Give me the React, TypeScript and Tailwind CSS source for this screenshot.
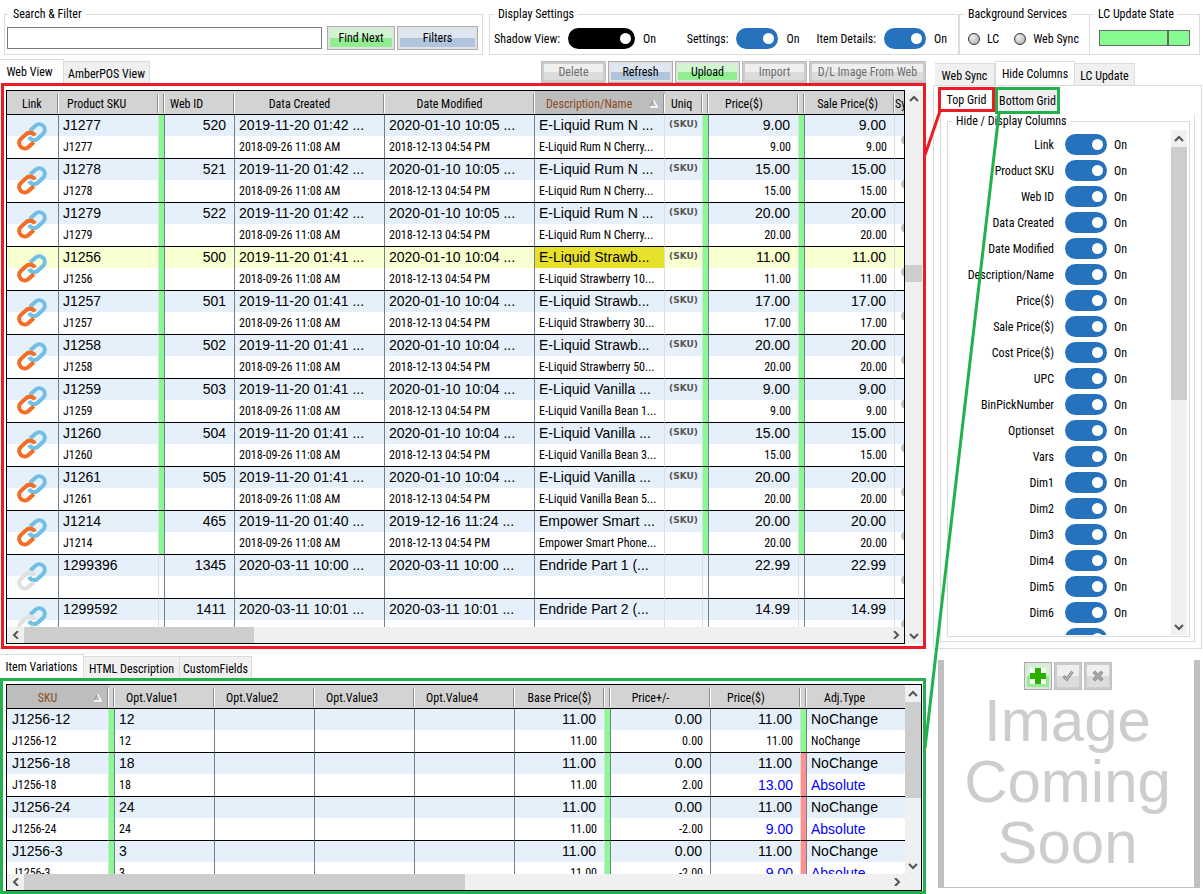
import type { ReactNode } from "react";

const BUTTON_TONES = {
  green: "border-[#adadad] bg-[linear-gradient(#d0f5d0_50%,#90ee90_50%)] shadow-[inset_0_0_0_2px_#e1e1e1] text-black",
  blue: "border-[#adadad] bg-[linear-gradient(#dfe7f2_50%,#b0c4de_50%)] shadow-[inset_0_0_0_2px_#e1e1e1] text-black",
  gray: "border-[#bfbfbf] bg-[linear-gradient(#efefef_50%,#dcdcdc_50%)] shadow-[inset_0_0_0_2px_#cccccc] text-[#6d6d6d]",
};

function Button({
  tone,
  className,
  label,
  disabled,
  children,
}: {
  tone: keyof typeof BUTTON_TONES;
  className: string;
  label?: string;
  disabled?: boolean;
  children: ReactNode;
}) {
  return (
    <button
      type="button"
      aria-label={label}
      disabled={disabled}
      className={"flex shrink-0 items-center justify-center border " + BUTTON_TONES[tone] + " " + className}
    >
      {children}
    </button>
  );
}

function Toggle({ label, wide }: { label: string; wide?: boolean }) {
  return (
    <input
      type="checkbox"
      role="switch"
      aria-label={label}
      defaultChecked
      className={
        "relative h-[21px] shrink-0 appearance-none rounded-full before:absolute before:right-1 before:top-[5px] before:size-[11px] before:rounded-full before:bg-white " +
        (wide ? "w-[67px] bg-black" : "w-[42px] bg-[#2672bd]")
      }
    />
  );
}

function Group({ title, className, children }: { title: string; className: string; children: ReactNode }) {
  return (
    <fieldset className={"min-w-0 border border-[#dcdcdc] " + className}>
      <legend className="ml-1 px-1 leading-[14px]">{title}</legend>
      {children}
    </fieldset>
  );
}

function Tab({ active, className, children }: { active?: boolean; className: string; children: ReactNode }) {
  return (
    <button
      type="button"
      role="tab"
      aria-selected={!!active}
      className={
        "shrink-0 whitespace-nowrap border border-b-0 border-[#dcdcdc] text-center " +
        (active ? "h-6 bg-white " : "h-[22px] border-l-0 bg-[#f0f0f0] pt-0.5 ") +
        className
      }
    >
      {children}
    </button>
  );
}

const ARROWS = {
  up: "M1 6 L5 2 L9 6",
  down: "M1 2 L5 6 L9 2",
  left: "M7 0 L3 4 L7 8",
  right: "M3 0 L7 4 L3 8",
};

function Arrow({ dir }: { dir: keyof typeof ARROWS }) {
  const vertical = dir === "up" || dir === "down";
  return (
    <span className={"flex shrink-0 items-center justify-center " + (vertical ? "h-[17px] w-full" : "h-full w-[17px]")}>
      <svg width="10" height="8" viewBox="0 0 10 8" fill="none" stroke="#555" strokeWidth="2">
        <path d={ARROWS[dir]} />
      </svg>
    </span>
  );
}

function SortMark() {
  return (
    <svg width="9" height="9" viewBox="0 0 9 9" className="absolute right-1.5 top-[5px]" fill="none">
      <path d="M4.5 1 L0.8 8" stroke="#8f8f8f" />
      <path d="M4.5 1 L8.2 8 H0.8" stroke="#fff" strokeWidth="1.4" />
    </svg>
  );
}

function ChainIcon({ linked }: { linked: boolean }) {
  return (
    <svg width="50" height="43" viewBox="0 3 150 129" fill="none" strokeWidth="11" className="mx-auto">
      <g transform="translate(72 67) rotate(-42) scale(1.12)">
        <path stroke="#6fc0e4" d="M7 -15 H26 A15 15 0 0 1 26 15 H8 A15 15 0 0 1 -7 -4" />
        <path stroke={linked ? "#f36f27" : "#e0e0e0"} d="M-7 15 H-26 A15 15 0 0 1 -26 -15 H-8 A15 15 0 0 1 7 4" />
      </g>
    </svg>
  );
}

interface Column {
  title: string;
  width: string;
  kind?: "text" | "number" | "flag" | "link" | "uniq" | "sync";
  align?: string;
  pad?: string;
  light?: boolean;
  sorted?: boolean;
}

interface Cell {
  top?: string;
  bottom?: string;
  changed?: boolean;
}

interface Row {
  id: string;
  cells: Cell[];
  selected?: boolean;
  unlinked?: boolean;
  flags?: string[];
}

const BAND = "bg-[linear-gradient(#e6f0fa_21px,#fff_21px)]";
const SELECTED_BAND = "bg-[linear-gradient(#f8ffd0_21px,#fff_21px)]";

function HeaderCell({ col }: { col: Column }) {
  return (
    <th
      scope="col"
      className={
        "h-6 border-b border-black p-0 pt-0.5 text-left font-normal " +
        (col.sorted ? "bg-[#bdbdbd] text-[#8b4a20]" : "bg-[#d3d3d3]")
      }
    >
      <div
        className={
          "relative h-[19px] overflow-hidden whitespace-nowrap border-r border-white leading-[21px] shadow-[inset_-1px_0_0_#8c8c8c] " +
          (col.align ?? "")
        }
      >
        {col.title}
        {col.sorted && <SortMark />}
      </div>
    </th>
  );
}

function BodyCell({ col, cell, row, flag }: { col: Column; cell?: Cell; row: Row; flag?: string }) {
  const edge = col.light ? "border-r-[#dcdcdc]" : "border-r-[#708090]";
  const base = "h-11 overflow-hidden border-b border-r border-b-black p-0 align-top " + edge;
  if (col.kind === "flag") return <td className={base + " " + (flag ?? "")} />;
  if (col.kind === "link")
    return (
      <td className={base}>
        <ChainIcon linked={!row.unlinked} />
      </td>
    );
  if (col.kind === "uniq")
    return (
      <td className={base + " text-center font-['DejaVu_Sans',sans-serif] text-[9px] leading-[18px] font-bold text-[#555]"}>
        {row.unlinked ? "" : "(SKU)"}
      </td>
    );
  if (col.kind === "sync")
    return (
      <td className={base + " pt-5 pl-1.5"}>
        <span className="block size-[10px] rounded-full bg-[#c0c0c0]" />
      </td>
    );
  const number = col.kind === "number";
  const pad = col.pad ?? "pl-1";
  const big = "font-['Liberation_Sans',sans-serif] text-[14px]";
  return (
    <td className={base}>
      <div
        className={
          "h-[21px] whitespace-nowrap leading-[21px] " +
          big +
          (number ? " pr-2 text-right" : " " + pad) +
          (row.selected && col.sorted ? " bg-[#e8e12c]" : "")
        }
      >
        {cell?.top}
      </div>
      <div
        className={
          "h-[22px] whitespace-nowrap leading-[22px] " +
          (number ? "pr-[7px] text-right " : pad + " ") +
          (cell?.changed ? big + " text-[#0000ff]" : "")
        }
      >
        {cell?.bottom}
      </div>
    </td>
  );
}

function Grid({ label, columns, rows }: { label: string; columns: Column[]; rows: Row[] }) {
  return (
    <table aria-label={label} className="w-max table-fixed border-separate border-spacing-0">
      <colgroup>
        {columns.map((c, i) => (
          <col key={i} className={c.width} />
        ))}
      </colgroup>
      <thead>
        <tr>
          {columns.map((c, i) => (
            <HeaderCell key={i} col={c} />
          ))}
        </tr>
      </thead>
      <tbody>
        {rows.map((r) => {
          let text = 0;
          let flags = 0;
          return (
            <tr key={r.id} className={r.selected ? SELECTED_BAND : BAND}>
              {columns.map((c, i) => {
                const plain = !c.kind || c.kind === "text" || c.kind === "number";
                return (
                  <BodyCell
                    key={i}
                    col={c}
                    row={r}
                    cell={plain ? r.cells[text++] : undefined}
                    flag={c.kind === "flag" ? r.flags?.[flags++] : undefined}
                  />
                );
              })}
            </tr>
          );
        })}
      </tbody>
    </table>
  );
}

const GREEN = "bg-[#87fb91]";
const RED = "bg-[#ff9191]";

const PRODUCT_COLUMNS: Column[] = [
  { title: "Link", width: "w-[52px]", kind: "link", align: "pl-[15px]" },
  { title: "Product SKU", width: "w-[100px]", align: "pl-2", light: true },
  { title: "", width: "w-[6px]", kind: "flag" },
  { title: "Web ID", width: "w-[70px]", kind: "number", align: "pl-[5px]" },
  { title: "Data Created", width: "w-[150px]", align: "pr-5 text-center" },
  { title: "Date Modified", width: "w-[150px]", align: "pr-5 text-center" },
  { title: "Description/Name", width: "w-[130px]", align: "pl-[11px]", light: true, sorted: true },
  { title: "Uniq", width: "w-[38px]", kind: "uniq", align: "pl-1.5", light: true },
  { title: "", width: "w-[6px]", kind: "flag" },
  { title: "Price($)", width: "w-[90px]", kind: "number", align: "pl-4", light: true },
  { title: "", width: "w-[6px]", kind: "flag" },
  { title: "Sale Price($)", width: "w-[90px]", kind: "number", align: "pr-4 text-right", light: true },
  { title: "Sync", width: "w-[60px]", kind: "sync", light: true },
];

// sku, web id, created, modified, description, description (shadow), price
const PRODUCTS = [
  ["J1277", "520", "2019-11-20 01:42 ...", "2020-01-10 10:05 ...", "E-Liquid Rum N ...", "E-Liquid Rum N Cherry...", "9.00"],
  ["J1278", "521", "2019-11-20 01:42 ...", "2020-01-10 10:05 ...", "E-Liquid Rum N ...", "E-Liquid Rum N Cherry...", "15.00"],
  ["J1279", "522", "2019-11-20 01:42 ...", "2020-01-10 10:05 ...", "E-Liquid Rum N ...", "E-Liquid Rum N Cherry...", "20.00"],
  ["J1256", "500", "2019-11-20 01:41 ...", "2020-01-10 10:04 ...", "E-Liquid Strawb...", "E-Liquid Strawberry 10...", "11.00"],
  ["J1257", "501", "2019-11-20 01:41 ...", "2020-01-10 10:04 ...", "E-Liquid Strawb...", "E-Liquid Strawberry 30...", "17.00"],
  ["J1258", "502", "2019-11-20 01:41 ...", "2020-01-10 10:04 ...", "E-Liquid Strawb...", "E-Liquid Strawberry 50...", "20.00"],
  ["J1259", "503", "2019-11-20 01:41 ...", "2020-01-10 10:04 ...", "E-Liquid Vanilla ...", "E-Liquid Vanilla Bean 1...", "9.00"],
  ["J1260", "504", "2019-11-20 01:41 ...", "2020-01-10 10:04 ...", "E-Liquid Vanilla ...", "E-Liquid Vanilla Bean 3...", "15.00"],
  ["J1261", "505", "2019-11-20 01:41 ...", "2020-01-10 10:04 ...", "E-Liquid Vanilla ...", "E-Liquid Vanilla Bean 5...", "20.00"],
  ["J1214", "465", "2019-11-20 01:40 ...", "2019-12-16 11:24 ...", "Empower Smart ...", "Empower Smart Phone...", "20.00"],
  ["1299396", "1345", "2020-03-11 10:00 ...", "2020-03-11 10:00 ...", "Endride Part 1 (...", "", "22.99"],
  ["1299592", "1411", "2020-03-11 10:01 ...", "2020-03-11 10:01 ...", "Endride Part 2 (...", "", "14.99"],
];

const PRODUCT_ROWS: Row[] = PRODUCTS.map(([sku, id, created, modified, name, shadow, price]) => {
  const linked = shadow !== "";
  return {
    id: sku,
    selected: sku === "J1256",
    unlinked: !linked,
    flags: linked ? [GREEN, GREEN, GREEN] : [],
    cells: [
      { top: sku, bottom: linked ? sku : "" },
      { top: id },
      { top: created, bottom: linked ? "2018-09-26 11:08 AM" : "" },
      { top: modified, bottom: linked ? "2018-12-13 04:54 PM" : "" },
      { top: name, bottom: shadow },
      { top: price, bottom: linked ? price : "" },
      { top: price, bottom: linked ? price : "" },
    ],
  };
});

const VARIATION_COLUMNS: Column[] = [
  { title: "SKU", width: "w-[102px]", align: "pr-5 text-center", pad: "pl-[5px]", light: true, sorted: true },
  { title: "", width: "w-[6px]", kind: "flag" },
  { title: "Opt.Value1", width: "w-[100px]", align: "pl-[11px]" },
  { title: "Opt.Value2", width: "w-[100px]", align: "pl-[11px]" },
  { title: "Opt.Value3", width: "w-[100px]", align: "pl-[11px]" },
  { title: "Opt.Value4", width: "w-[100px]", align: "pl-[11px]" },
  { title: "Base Price($)", width: "w-[90px]", kind: "number", align: "text-center", light: true },
  { title: "", width: "w-[6px]", kind: "flag" },
  { title: "Price+/-", width: "w-[100px]", kind: "number", align: "pr-5 text-center" },
  { title: "Price($)", width: "w-[90px]", kind: "number", align: "pl-4", light: true },
  { title: "", width: "w-[6px]", kind: "flag" },
  { title: "Adj.Type", width: "w-[200px]", align: "pl-[17px]" },
];

const VARIATION_ROWS: Row[] = [
  ["12", "0.00", "11.00"],
  ["18", "2.00", "13.00"],
  ["24", "-2.00", "9.00"],
  ["3", "-2.00", "9.00"],
].map(([option, diff, price]) => {
  const changed = diff !== "0.00";
  const sku = "J1256-" + option;
  return {
    id: sku,
    flags: [GREEN, GREEN, changed ? RED : GREEN],
    cells: [
      { top: sku, bottom: sku },
      { top: option, bottom: option },
      {},
      {},
      {},
      { top: "11.00", bottom: "11.00" },
      { top: "0.00", bottom: diff },
      { top: "11.00", bottom: price, changed },
      { top: "NoChange", bottom: changed ? "Absolute" : "NoChange", changed },
    ],
  };
});

const TOGGLES = [
  "Link", "Product SKU", "Web ID", "Data Created", "Date Modified", "Description/Name", "Price($)",
  "Sale Price($)", "Cost Price($)", "UPC", "BinPickNumber", "Optionset", "Vars", "Dim1", "Dim2", "Dim3",
  "Dim4", "Dim5", "Dim6",
];

function Setting({ label, wide }: { label: string; wide?: boolean }) {
  return (
    <div className="flex items-center gap-2">
      <span>{label}:</span>
      <Toggle label={label} wide={wide} />
      <span className="w-4">On</span>
    </div>
  );
}

function Led() {
  return (
    <span className="size-3 rounded-full border border-[#333] bg-[radial-gradient(circle_at_35%_35%,#eee,#a8a8a8)]" />
  );
}

function TopBar() {
  return (
    <div className="flex h-[55px] shrink-0 items-stretch pl-1 pr-[3px] pt-[7px]">
      <Group title="Search & Filter" className="mr-1.5 flex-1">
        <div className="flex items-center pl-0.5 pr-1 pt-[5px]">
          <input type="text" aria-label="Search" className="h-[22px] min-w-0 flex-1 border border-[#7a7a7a] bg-white px-1" />
          <Button tone="green" className="ml-[5px] h-6 w-[68px]">Find Next</Button>
          <Button tone="blue" className="ml-0.5 h-6 w-[81px]">Filters</Button>
        </div>
      </Group>
      <Group title="Display Settings" className="w-[470px]">
        <div className="flex items-center gap-3.5 pl-1 pr-2 pt-[7px]">
          <div className="mr-auto">
            <Setting label="Shadow View" wide />
          </div>
          <Setting label="Settings" />
          <Setting label="Item Details" />
        </div>
      </Group>
      <Group title="Background Services" className="w-[131px]">
        <div className="flex items-center gap-[7px] pl-2 pt-2.5">
          <Led />
          <span className="mr-2">LC</span>
          <Led />
          <span>Web Sync</span>
        </div>
      </Group>
      <Group title="LC Update State" className="w-[110px] border-l-0">
        <div className="px-[9px] pt-[9px]">
          <div className="flex h-4 border border-[#696969] bg-[#87fb91]">
            <div className="w-[69px] border-r-2 border-[#696969]" />
          </div>
        </div>
      </Group>
    </div>
  );
}

function VScroll({ top, thumb, className }: { top: string; thumb: string; className: string }) {
  return (
    <div aria-hidden className={"flex shrink-0 flex-col bg-[#f0f0f0] " + className}>
      <Arrow dir="up" />
      <div className="flex min-h-0 flex-1 flex-col">
        <div className={top} />
        <div className={"bg-[#cdcdcd] " + thumb} />
      </div>
      <Arrow dir="down" />
    </div>
  );
}

function HScroll({ thumb }: { thumb: string }) {
  return (
    <div aria-hidden className="flex h-4 min-w-0 flex-none bg-[#f0f0f0]">
      <Arrow dir="left" />
      <div className={"bg-[#cdcdcd] " + thumb} />
      <div className="flex-1" />
      <Arrow dir="right" />
    </div>
  );
}

function LeftColumn() {
  return (
    <div className="flex min-w-0 flex-1 flex-col">
      <div className="flex h-[22px] shrink-0 items-end">
        <Tab active className="w-16 border-l-0 pr-1">Web View</Tab>
        <Tab className="w-[86px]">AmberPOS View</Tab>
        <div className="ml-auto flex gap-0.5">
          <Button tone="gray" disabled className="h-[22px] w-[65px]">Delete</Button>
          <Button tone="blue" className="h-[22px] w-[65px]">Refresh</Button>
          <Button tone="green" className="h-[22px] w-[65px]">Upload</Button>
          <Button tone="gray" disabled className="h-[22px] w-[65px]">Import</Button>
          <Button tone="gray" disabled className="h-[22px] w-[117px]">D/L Image From Web</Button>
        </div>
      </div>

      <section className="ml-px flex min-h-0 flex-1 border-[3px] border-[#ed1c24] pt-1 pr-px pb-0.5 pl-0.5">
        <div className="flex min-w-0 flex-1 flex-col border border-black">
          <div className="min-h-0 flex-1 overflow-hidden">
            <Grid label="Products" columns={PRODUCT_COLUMNS} rows={PRODUCT_ROWS} />
          </div>
          <HScroll thumb="w-[230px]" />
        </div>
        <VScroll top="h-[158px]" thumb="h-[17px]" className="w-[17px]" />
      </section>

      <div className="mt-[7px] flex h-[22px] shrink-0 items-end">
        <Tab active className="w-[84px] border-l-0">Item Variations</Tab>
        <Tab className="w-24">HTML Description</Tab>
        <Tab className="w-[72px]">CustomFields</Tab>
      </div>

      <section className="flex h-[216px] shrink-0 border-[3px] border-[#22b14c] pt-[3px] pr-px pl-[3px]">
        <div className="flex min-w-0 flex-1 flex-col border border-black">
          <div className="flex min-h-0 flex-1">
            <div className="min-w-0 flex-1 overflow-hidden">
              <Grid label="Item variations" columns={VARIATION_COLUMNS} rows={VARIATION_ROWS} />
            </div>
            <VScroll top="h-0" thumb="h-[96px]" className="w-4" />
          </div>
          <div className="flex">
            <div className="min-w-0 flex-1">
              <HScroll thumb="w-[441px]" />
            </div>
            <div className="w-4 bg-[#f0f0f0]" />
          </div>
        </div>
      </section>
    </div>
  );
}

function HideColumnsPanel() {
  return (
    <div className="flex min-h-0 flex-1 flex-col">
      <div className="flex h-6 shrink-0 items-end pl-0.5">
        <Tab className="w-[60px] border-l">Web Sync</Tab>
        <Tab active className="w-20">Hide Columns</Tab>
        <Tab className="w-[60px]">LC Update</Tab>
      </div>
      <div className="flex min-h-0 flex-1 flex-col border border-[#dcdcdc] pt-px pr-1.5 pb-1.5 pl-1">
        <div className="flex h-[27px] shrink-0 items-start">
          <button type="button" role="tab" aria-selected className="h-[25px] w-[57px] border-[3px] border-[#ed1c24] bg-white">
            Top Grid
          </button>
          <button type="button" role="tab" aria-selected={false} className="h-[27px] w-[65px] border-[3px] border-[#22b14c] bg-[#f0f0f0] pt-px">
            Bottom Grid
          </button>
        </div>
        <div className="ml-0.5 flex min-h-0 flex-1 flex-col border border-t-0 border-[#dcdcdc] pr-1 pb-1 pl-1.5">
          <fieldset className="flex min-h-0 flex-1 flex-col border border-[#dcdcdc]">
            <legend className="ml-1 px-1 leading-[14px]">Hide / Display Columns</legend>
            <div className="flex min-h-0 flex-1 pt-0.5 pr-0.5 pb-px">
              <div className="flex min-h-0 flex-1 flex-col gap-[5px] overflow-hidden pt-1">
                {TOGGLES.map((t) => (
                  <div key={t} className="flex shrink-0 items-center">
                    <span className="w-[106px] text-right">{t}</span>
                    <span className="flex pl-[11px] pr-[7px]">
                      <Toggle label={t} />
                    </span>
                    <span>On</span>
                  </div>
                ))}
                <div className="flex shrink-0 pl-[117px]">
                  <Toggle label="Dim7" />
                </div>
              </div>
              <VScroll top="h-0" thumb="h-[253px]" className="w-4" />
            </div>
          </fieldset>
        </div>
      </div>
    </div>
  );
}

function ImagePanel() {
  return (
    <div className="mt-[11px] mr-0.5 mb-1.5 ml-[5px] h-[228px] shrink-0 border-x-[6px] border-b border-[#c0c0c0] bg-white pt-0.5 pr-[3px]">
      <div className="flex justify-center gap-0.5">
        <Button tone="green" label="Add image" className="size-7">
          <svg width="16" height="16" viewBox="0 0 16 16">
            <rect width="16" height="16" fill="#fff" />
            <path fill="#d0f5d0" d="M5 0h6v16h-6z" />
            <path fill="#2bb000" d="M5 0h6v5h5v6h-5v5h-6v-5h-5v-6h5z" />
          </svg>
        </Button>
        <Button tone="gray" disabled label="Accept image" className="size-7">
          <svg width="12" height="12" viewBox="0 0 12 12" fill="none" strokeLinecap="square">
            <path d="M2.5 7.2 L4.8 9.2 L9.5 2.8" stroke="#8b8b8b" strokeWidth="3" />
            <path d="M2.5 7.2 L4.8 9.2 L9.5 2.8" stroke="#b5b5b5" strokeWidth="1.4" />
          </svg>
        </Button>
        <Button tone="gray" disabled label="Remove image" className="size-7">
          <svg width="12" height="12" viewBox="0 0 12 12" fill="none" strokeLinecap="square">
            <path d="M3 3 L9 9 M9 3 L3 9" stroke="#8b8b8b" strokeWidth="3.4" />
            <path d="M3 3 L9 9 M9 3 L3 9" stroke="#b0b0b0" strokeWidth="1.6" />
          </svg>
        </Button>
      </div>
      <p className="text-center font-['Liberation_Sans',sans-serif] text-[60px] leading-[61px] text-[#cdcdcd]">
        Image
        <br />
        Coming
        <br />
        Soon
      </p>
    </div>
  );
}

export default function App() {
  return (
    <div className="relative flex h-screen min-w-[1100px] flex-col overflow-hidden bg-white font-['Roboto_Condensed','Roboto',sans-serif] text-xs text-black">
      <TopBar />
      <div className="flex min-h-0 flex-1 pt-1.5">
        <LeftColumn />
        <aside className="ml-[7px] flex w-[270px] shrink-0 flex-col pr-px">
          <HideColumnsPanel />
          <ImagePanel />
        </aside>
      </div>
      {/* callouts joining each tab to its grid */}
      <svg aria-hidden width="280" height="894" className="pointer-events-none absolute right-0 top-0" fill="none" strokeWidth="3">
        <path d="M17 111 L2 155" stroke="#ed1c24" />
        <path d="M76 113 L2 748" stroke="#22b14c" />
      </svg>
    </div>
  );
}
